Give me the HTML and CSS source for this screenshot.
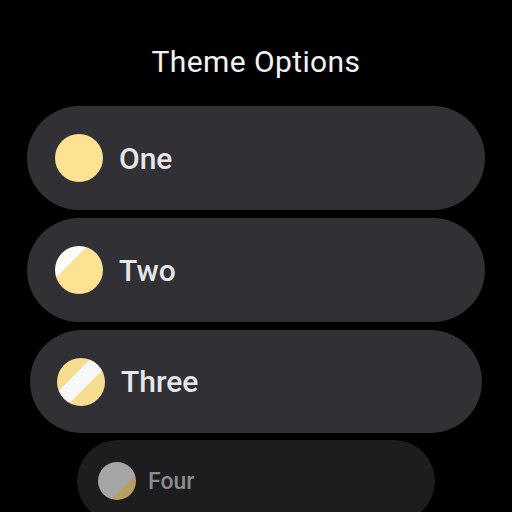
FILE: index.html
```html
<!DOCTYPE html>
<html lang="en">
<head>
    <meta charset="UTF-8">
    <meta name="viewport" content="width=device-width, initial-scale=1.0">
    <title>Theme Options</title>
    <link rel="stylesheet" href="styles.css">
</head>
<body>
    <div class="screen">
        <h1 class="title">Theme Options</h1>
        <div class="list">
            <div class="chip">
                <span class="swatch swatch-one"></span>
                <span class="label">One</span>
            </div>
            <div class="chip">
                <span class="swatch swatch-two"></span>
                <span class="label">Two</span>
            </div>
            <div class="chip chip-edge">
                <span class="swatch swatch-three"></span>
                <span class="label">Three</span>
            </div>
            <div class="chip chip-far">
                <span class="swatch swatch-four"></span>
                <span class="label">Four</span>
            </div>
        </div>
    </div>
</body>
</html>
```

FILE: styles.css
```css
* {
    margin: 0;
    padding: 0;
    box-sizing: border-box;
    font-family: Roboto, "Liberation Sans", sans-serif;
}

body {
    background: #000;
    width: 512px;
    height: 512px;
    overflow: hidden;
}

.screen {
    display: flex;
    flex-direction: column;
    align-items: center;
}

.title {
    margin-top: 44px;
    margin-bottom: 26px;
    font-size: 30px;
    line-height: 36px;
    font-weight: 400;
    color: #f2f2f2;
    letter-spacing: 0.4px;
}

.list {
    display: flex;
    flex-direction: column;
    align-items: center;
    gap: 8px;
}

.chip {
    width: 458px;
    height: 104px;
    border-radius: 52px;
    background: #303035;
    display: flex;
    align-items: center;
    padding-left: 28px;
    gap: 16px;
}

.chip-edge {
    width: 452px;
    height: 103px;
    padding-left: 27px;
}

.chip-far {
    width: 358px;
    height: 82px;
    margin-top: -1px;
    background: #1d1d20;
    padding-left: 21px;
    gap: 12px;
}

.label {
    font-size: 30px;
    font-weight: 500;
    color: #e6e6e9;
    letter-spacing: 0;
}

.chip-far .label {
    font-size: 23px;
    color: #8c8c8f;
}

.swatch {
    width: 48px;
    height: 48px;
    border-radius: 50%;
    flex-shrink: 0;
    background: #fde293;
}

.swatch-two {
    background: linear-gradient(135deg, #fbfbfb 34%, #fde293 34%);
}

.swatch-three {
    background: linear-gradient(135deg, #f7dd91 36%, #f8f8f8 36%, #f8f8f8 60%, #f7dd91 60%);
}

.swatch-four {
    width: 38px;
    height: 38px;
    background: linear-gradient(135deg, #a6a6a8 66%, #b7a063 66%);
}
```
